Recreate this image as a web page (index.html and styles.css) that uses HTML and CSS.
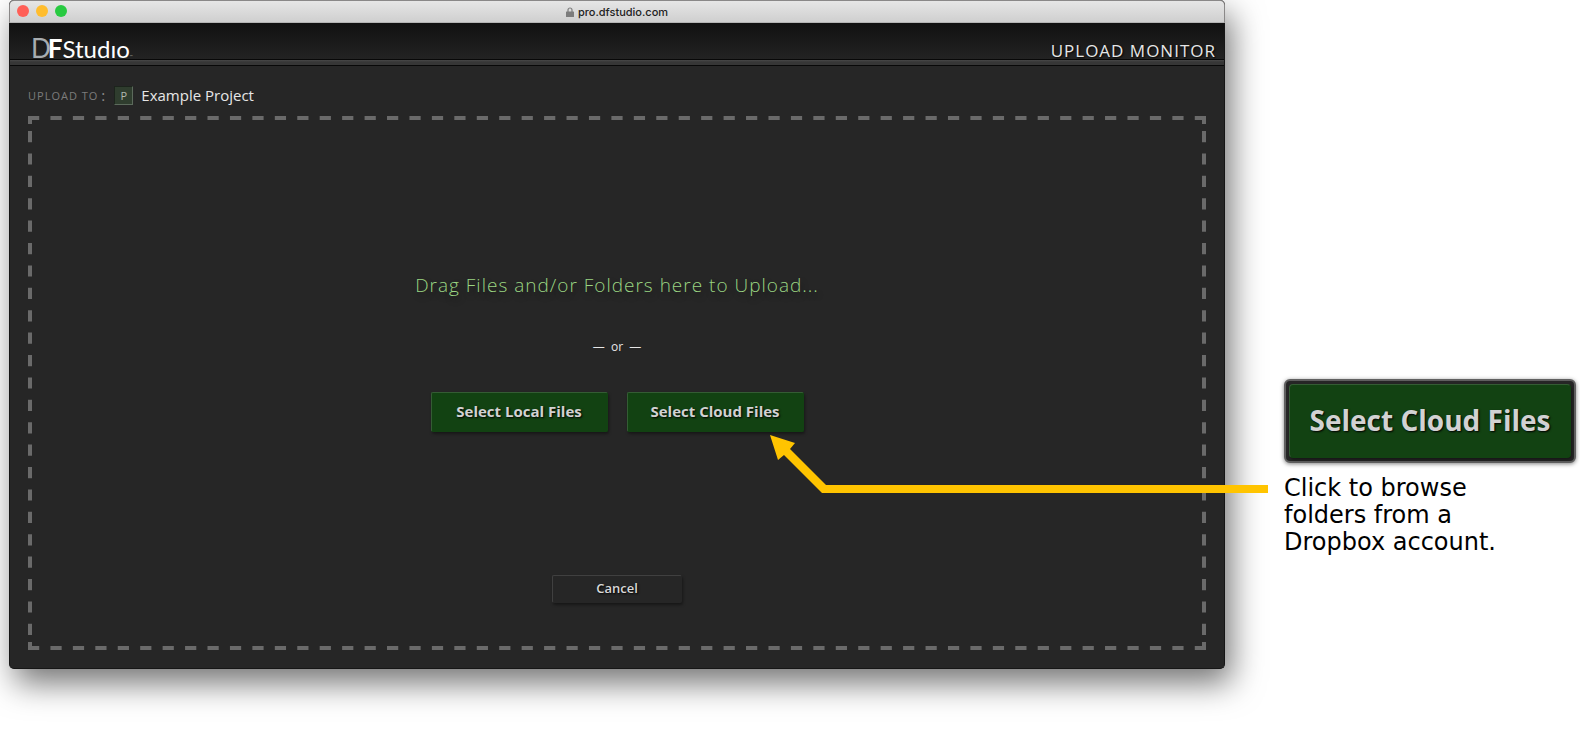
FILE: index.html
```html
<!DOCTYPE html>
<html lang="en">
<head>
    <meta charset="UTF-8">
    <meta name="viewport" content="width=device-width, initial-scale=1.0">
    <title>DF Studio - Upload Monitor</title>
    <link rel="stylesheet" href="styles.css">
</head>
<body>
    <div class="page">
        <main class="window">
            <div class="titlebar">
                <div class="lights">
                    <span class="light red"></span>
                    <span class="light yellow"></span>
                    <span class="light green"></span>
                </div>
                <div class="address">
                    <svg class="lock" width="8" height="10" viewBox="0 0 8 10">
                        <path d="M2 5V3a2 2 0 0 1 4 0v2" fill="none" stroke="#7c7c7c" stroke-width="1.2"/>
                        <rect y="4.5" width="8" height="5.5" rx="0.6" fill="#7c7c7c"/>
                    </svg>
                    <span>pro.dfstudio.com</span>
                </div>
            </div>

            <header class="app-header">
                <a href="#" class="logo"><span class="logo-d">D</span><span class="logo-f">F</span><span class="logo-name">Studıo</span><span class="logo-tm">™</span></a>
                <h1>UPLOAD MONITOR</h1>
            </header>

            <div class="content">
                <div class="upload-to">
                    <span class="label">UPLOAD TO</span>
                    <span class="colon">:</span>
                    <span class="project-icon">P</span>
                    <span class="project-name">Example Project</span>
                </div>

                <section class="dropzone">
                    <svg class="dashes" width="100%" height="100%">
                        <line x1="0" y1="2" x2="100%" y2="2" pathLength="105" stroke-dasharray="1"/>
                        <line x1="0" y1="100%" x2="100%" y2="100%" pathLength="105" stroke-dasharray="1" transform="translate(0 -2)"/>
                        <line x1="2" y1="0" x2="2" y2="100%" pathLength="5340" stroke-dasharray="112" stroke-dashoffset="74"/>
                        <line x1="100%" y1="0" x2="100%" y2="100%" pathLength="5340" stroke-dasharray="112" stroke-dashoffset="74" transform="translate(-2 0)"/>
                        <!-- corners -->
                        <line x1="2" y1="0" x2="2" y2="100%" pathLength="5340" stroke-dasharray="80 5180"/>
                        <line x1="100%" y1="0" x2="100%" y2="100%" pathLength="5340" stroke-dasharray="80 5180" transform="translate(-2 0)"/>
                    </svg>
                    <p class="drag-text">Drag Files and/or Folders here to Upload...</p>
                    <p class="or">—&nbsp; or &nbsp;—</p>
                    <div class="buttons">
                        <button type="button" class="btn btn-green">Select Local Files</button>
                        <button type="button" class="btn btn-green">Select Cloud Files</button>
                    </div>
                    <button type="button" class="btn btn-cancel">Cancel</button>
                </section>
            </div>
        </main>

        <aside class="callout">
            <svg class="arrow" width="498" height="58" viewBox="0 0 498 58">
                <path d="M0 0L25 8L20 14L56 50H498V58H52L14 20L8 25Z" fill="#ffc400"/>
            </svg>
            <div class="callout-frame">
                <button type="button" class="btn btn-green btn-large">Select Cloud Files</button>
            </div>
            <p class="callout-text">Click to browse<br>folders from a<br>Dropbox account.</p>
        </aside>
    </div>
</body>
</html>
```
FILE: styles.css
```css
* {
    box-sizing: border-box;
}
body {
    margin: 0;
    background: #fff;
    font-family: "Open Sans", sans-serif;
    color: #e6e6e6;
}
h1, p {
    margin: 0;
}
.page {
    display: flex;
    align-items: flex-start;
    gap: 59px;
    min-height: 100vh;
    padding: 0 4px 0 9px;
    overflow: hidden;
}

/* Browser window */
.window {
    flex: 1;
    min-width: 0;
    background: #262626;
    border: 1px solid #161616;
    border-top: none;
    border-radius: 5px;
    box-shadow: 6px 14px 32px rgba(0, 0, 0, 0.55);
}
.titlebar {
    position: relative;
    display: flex;
    align-items: center;
    justify-content: center;
    height: 23px;
    margin: 0 -1px;
    background: linear-gradient(#e6e6e6, #cfcfcf);
    border: 1px solid #8a8888;
    border-bottom-color: #b4b4b4;
    border-radius: 5px 5px 0 0;
}
.lights {
    position: absolute;
    left: 7px;
    top: 4px;
    display: flex;
    gap: 7px;
}
.light {
    width: 12px;
    height: 12px;
    border-radius: 50%;
}
.red {
    background: #ff5f57;
}
.yellow {
    background: #ffbd2e;
}
.green {
    background: #28ca41;
}
.address {
    display: flex;
    align-items: center;
    gap: 4px;
    font-family: Inter, sans-serif;
    font-size: 11px;
    font-weight: 500;
    line-height: 16px;
    color: #222;
}

/* App header */
.app-header {
    display: flex;
    justify-content: space-between;
    align-items: flex-end;
    height: 43px;
    padding: 0 8px 0 21px;
    background: linear-gradient(#111, #232323 36px, #080808 36px, #080808 37px, #484848 37px, #363636 39px, #363636 42px, #080808 42px);
}
.app-header h1 {
    font-size: 17px;
    font-weight: 400;
    line-height: 24px;
    letter-spacing: 1px;
    padding-bottom: 3px;
    text-shadow: 1px 1px 2px #000;
}
.logo {
    display: flex;
    align-items: baseline;
    font-family: Lato, sans-serif;
    font-size: 26px;
    line-height: 16px;
    padding-bottom: 1px;
    color: #fff;
    text-decoration: none;
}
.logo-d {
    color: #a8adb0;
}
.logo-f {
    font-weight: 700;
    margin-left: -3px;
}
.logo-name {
    font-size: 24px;
}
.logo-tm {
    font-size: 4px;
    color: #999;
}

/* Upload target */
.content {
    padding: 19px 18px 18px;
}
.upload-to {
    display: flex;
    align-items: center;
    height: 20px;
    margin-bottom: 11px;
    line-height: 18px;
}
.label {
    font-size: 11px;
    letter-spacing: 1px;
    color: #7c7c7c;
    padding-top: 2px;
}
.colon {
    margin: 0 9px 0 3px;
    font-size: 15px;
    color: #8c8c8c;
}
.project-icon {
    width: 19px;
    height: 19px;
    margin-right: 8px;
    background: #2f3d2e;
    border: 1px solid #1c241c;
    border-right-color: #5c6a5c;
    border-bottom-color: #5c6a5c;
    font-size: 11px;
    line-height: 17px;
    text-align: center;
    color: #b0b8ae;
}
.project-name {
    font-size: 15px;
    padding-bottom: 1px;
}

/* Drop area */
.dropzone {
    position: relative;
    display: flex;
    flex-direction: column;
    align-items: center;
    padding: 157px 20px 47px;
}
.dashes {
    position: absolute;
    inset: 0;
    stroke: #6a6a6a;
    stroke-width: 4px;
    pointer-events: none;
}
.drag-text {
    font-size: 19px;
    font-weight: 300;
    line-height: 24px;
    letter-spacing: 1px;
    color: #9ad582;
    text-shadow: 2px 4px 6px rgba(0, 0, 0, 0.4);
}
.or {
    margin-top: 40px;
    font-size: 12px;
    line-height: 20px;
}
.buttons {
    display: flex;
    gap: 19px;
    margin: 35px 0 143px;
}
.btn {
    padding: 0 0 2px;
    border: 1px solid #333;
    border-radius: 2px;
    font-family: inherit;
    cursor: pointer;
    text-shadow: 1px 1px 2px #000;
    box-shadow: 1px 2px 3px rgba(0, 0, 0, 0.4);
}
.btn-green {
    width: 177px;
    height: 40px;
    background: #124212;
    border-color: #345c34 #124212 #124212 #345c34;
    color: #d2d2d2;
    font-size: 15px;
    font-weight: 700;
}
.btn-cancel {
    width: 130px;
    height: 28px;
    background: #262626;
    border-color: #404040 #262626 #262626 #404040;
    color: #d8d8d8;
    font-size: 13px;
    font-weight: 600;
}

/* Annotation beside the window */
.callout {
    position: relative;
    width: 292px;
    flex-shrink: 0;
    padding-top: 379px;
}
.callout-frame {
    padding: 3px;
    background: #262626;
    border: 2px solid #606060;
    border-radius: 6px;
    box-shadow: 0 1px 4px rgba(0, 0, 0, 0.5);
}
.btn-large {
    display: block;
    width: 100%;
    height: 74px;
    border-radius: 4px;
    font-size: 28px;
}
.callout-text {
    margin-top: 12px;
    font-family: "DejaVu Sans", sans-serif;
    font-size: 24px;
    line-height: 27px;
    color: #000;
}
.arrow {
    position: absolute;
    right: 308px;
    top: 435px;
}
```
